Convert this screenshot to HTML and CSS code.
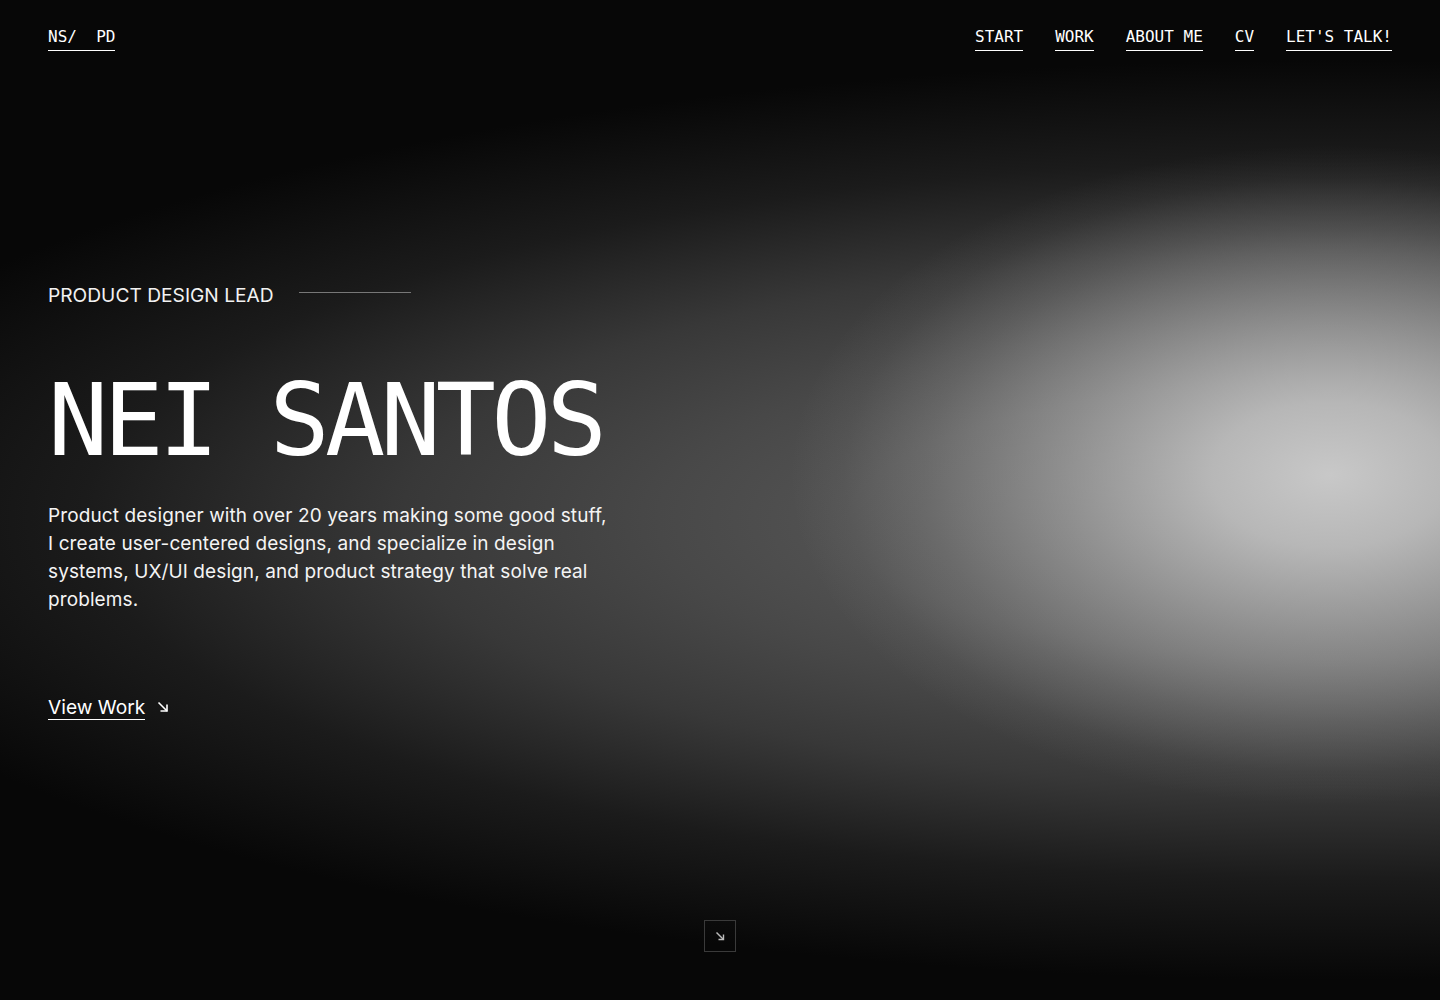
FILE: index.html
```html
<!DOCTYPE html>
<html lang="en">
<head>
    <meta charset="UTF-8">
    <meta name="viewport" content="width=device-width, initial-scale=1.0">
    <title>Nei Santos - Product Design</title>
    <link rel="stylesheet" href="styles.css">
</head>
<body>
    <header class="topbar">
        <a href="#" class="logo">NS/&nbsp; PD</a>
        <nav class="menu">
            <a href="#">START</a>
            <a href="#">WORK</a>
            <a href="#">ABOUT ME</a>
            <a href="#">CV</a>
            <a href="#">LET'S TALK!</a>
        </nav>
    </header>

    <main class="hero">
        <div class="role">
            <span>PRODUCT DESIGN LEAD</span>
            <span class="role-line"></span>
        </div>
        <h1 class="name">NEI SANTOS</h1>
        <p class="intro">Product designer with over 20 years making some good stuff, I create user-centered designs, and specialize in design systems, UX/UI design, and product strategy that solve real problems.</p>
        <div class="cta">
            <a href="#" class="view-work">View Work</a>
            <svg class="arrow" width="12" height="12" viewBox="0 0 12 12" fill="none" stroke="#fff" stroke-width="1.6">
                <path d="M1.5 1.5 L10 10"/>
                <path d="M10 3.5 V10 H3.5"/>
            </svg>
        </div>
    </main>

    <!-- scroll down -->
    <a href="#" class="scroll-down">
        <svg width="10" height="10" viewBox="0 0 10 10" fill="none" stroke="#bbb" stroke-width="1.4">
            <path d="M1.5 1.5 L8.5 8.5"/>
            <path d="M8.5 3.5 V8.5 H3.5"/>
        </svg>
    </a>
</body>
</html>
```

FILE: styles.css
```css
*{
    padding: 0;
    margin: 0;
    box-sizing: border-box;
}
html, body{
    height: 100%;
}
body{
    min-height: 1000px;
    display: flex;
    flex-direction: column;
    color: #fff;
    background-color: #000;
    background-image:
        radial-gradient(ellipse 540px 330px at 1330px 475px, rgba(200, 200, 200, 1) 0%, rgba(200, 200, 200, 0.85) 22%, rgba(200, 200, 200, 0.5) 50%, rgba(200, 200, 200, 0.2) 75%, rgba(200, 200, 200, 0.05) 90%, rgba(200, 200, 200, 0) 100%),
        radial-gradient(ellipse 1600px 460px at 1330px 520px, #585858 0%, #525252 30%, #484848 42%, #383838 58%, #1b1b1b 78%, #070707 100%);
    background-repeat: no-repeat;
    font-family: "Inter", "Liberation Sans", sans-serif;
    overflow: hidden;
}
a{
    color: #fff;
    text-decoration: none;
}
.topbar{
    display: flex;
    justify-content: space-between;
    align-items: flex-start;
    padding: 27px 48px 0;
    font-family: "DejaVu Sans Mono", "Liberation Mono", monospace;
    font-size: 16px;
    line-height: 20px;
}
.logo, .menu a{
    padding-bottom: 3px;
    border-bottom: 1.5px solid #fff;
    white-space: pre;
}
.menu{
    display: flex;
    gap: 32px;
}
.hero{
    padding: 0 48px;
    margin-top: 232px;
}
.role{
    display: flex;
    align-items: center;
    gap: 25px;
    font-size: 19.2px;
    line-height: 24px;
    color: #f2f2f2;
}
.role-line{
    width: 112px;
    height: 1px;
    margin-top: -5px;
    background: #777;
}
.name{
    margin-top: 64px;
    font-family: "DejaVu Sans Mono", monospace;
    font-weight: normal;
    font-size: 100px;
    line-height: 100px;
    letter-spacing: -4.8px;
    color: #fff;
}
.intro{
    margin-top: 31px;
    width: 563px;
    font-size: 19px;
    line-height: 28px;
    letter-spacing: 0.1px;
    color: #f4f4f4;
}
.cta{
    margin-top: 82px;
    display: flex;
    align-items: center;
    gap: 12px;
}
.view-work{
    font-size: 19.2px;
    line-height: 23px;
    border-bottom: 1.5px solid #fff;
}
.arrow{
    margin-top: -2px;
}
.scroll-down{
    margin-top: auto;
    margin-bottom: 48px;
    align-self: center;
    width: 32px;
    height: 32px;
    border: 1px solid #3a3a3a;
    display: flex;
    align-items: center;
    justify-content: center;
}
```
